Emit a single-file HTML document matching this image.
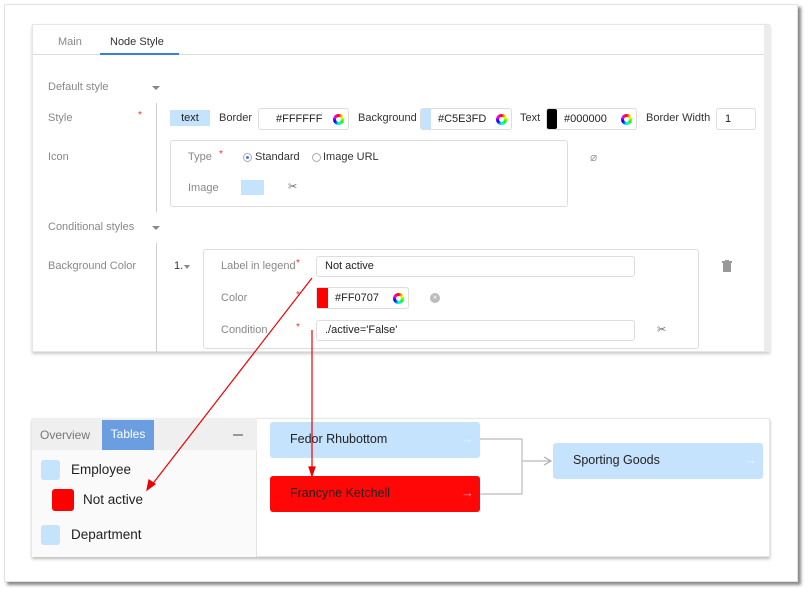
<!DOCTYPE html>
<html><head><meta charset="utf-8"><style>
*{box-sizing:border-box;margin:0;padding:0}
body{width:808px;height:590px;background:#fff;position:relative;font-family:"Liberation Sans",sans-serif;font-size:11px;color:#333;overflow:hidden}
.a{position:absolute}
.frame{left:4px;top:4px;width:794px;height:578px;background:#fff;border:1px solid #e2e2e2;box-shadow:3px 3px 3px #888}
.panel{left:32px;top:24px;width:738px;height:328px;background:#fff;border:1px solid #e6e6e6;border-right:6px solid #ececec;box-shadow:0 2px 3px #ccc}
.lbl{color:#888}
.star{color:#e33;font-size:10px}
.in{position:absolute;border:1px solid #ddd;border-radius:3px;background:#fff;height:22px;font-size:11px;color:#222;padding:0 0 0 8px;line-height:20px}
.wheel{position:absolute;width:11px;height:11px;border-radius:50%;background:conic-gradient(red,#ff0,#0f0,#0ff,#00f,#f0f,red);top:5px}
.wheel:after{content:"";position:absolute;left:3px;top:3px;width:5px;height:5px;border-radius:50%;background:#fff}
.caret{position:absolute;width:0;height:0;border-left:4px solid transparent;border-right:4px solid transparent;border-top:4px solid #888}
.node{position:absolute;width:210px;height:36px;border-radius:3px;font-size:12.5px;color:#222;padding-left:20px;line-height:34px}
.node .ar{position:absolute;right:6px;top:0;color:#e8f2ff;font-size:13px}
</style></head><body>
<div class="a frame"></div>
<div class="a panel"></div>
<div class="a" style="left:33px;top:54px;width:731px;height:1px;background:#ddd"></div>
<div class="a lbl" style="left:58px;top:36px;font-size:11px">Main</div>
<div class="a" style="left:110px;top:36px;font-size:11px;color:#333">Node Style</div>
<div class="a" style="left:100px;top:53px;width:79px;height:2px;background:#3d7fd4"></div>

<div class="a lbl" style="left:48px;top:81px">Default style</div>
<div class="caret" style="left:152px;top:86px"></div>
<div class="a lbl" style="left:48px;top:112px">Style</div>
<div class="a star" style="left:138px;top:110px">*</div>
<div class="a" style="left:156px;top:103px;width:1px;height:109px;background:#ccc"></div>
<div class="a lbl" style="left:48px;top:151px">Icon</div>

<div class="a" style="left:170px;top:110px;width:40px;height:16px;background:#c5e3fd;text-align:center;line-height:16px;color:#222">text</div>
<div class="a" style="left:219px;top:112px">Border</div>
<div class="in" style="left:258px;top:108px;width:91px;padding-left:17px">#FFFFFF<div class="wheel" style="right:4px"></div></div>
<div class="a" style="left:358px;top:112px">Background</div>
<div class="in" style="left:420px;top:108px;width:92px;padding-left:17px"><div class="a" style="left:0;top:0;width:10px;height:20px;background:#c5e3fd"></div>#C5E3FD<div class="wheel" style="right:4px"></div></div>
<div class="a" style="left:520px;top:112px">Text</div>
<div class="in" style="left:546px;top:108px;width:91px;padding-left:17px"><div class="a" style="left:0;top:0;width:10px;height:20px;background:#000;border-radius:2px"></div>#000000<div class="wheel" style="right:4px"></div></div>
<div class="a" style="left:646px;top:112px">Border Width</div>
<div class="in" style="left:716px;top:108px;width:40px">1</div>

<div class="a" style="left:170px;top:140px;width:398px;height:67px;border:1px solid #ddd;border-radius:3px"></div>
<div class="a lbl" style="left:188px;top:151px">Type</div>
<div class="a star" style="left:219px;top:149px">*</div>
<div class="a" style="left:243px;top:153px;width:9px;height:9px;border:1px solid #aaa;border-radius:50%"><div class="a" style="left:2px;top:2px;width:3px;height:3px;border-radius:50%;background:#3d7fd4"></div></div>
<div class="a" style="left:255px;top:151px">Standard</div>
<div class="a" style="left:312px;top:153px;width:9px;height:9px;border:1px solid #aaa;border-radius:50%"></div>
<div class="a" style="left:323px;top:151px">Image URL</div>
<div class="a lbl" style="left:188px;top:182px">Image</div>
<div class="a" style="left:241px;top:180px;width:23px;height:15px;background:#c5e3fd"></div>
<div class="a" style="left:288px;top:180px;color:#666;font-size:11px">✂</div>
<div class="a" style="left:590px;top:150px;color:#999;font-size:12px">⌀</div>

<div class="a lbl" style="left:48px;top:221px">Conditional styles</div>
<div class="caret" style="left:152px;top:226px"></div>
<div class="a" style="left:156px;top:243px;width:1px;height:109px;background:#ccc"></div>
<div class="a lbl" style="left:48px;top:260px">Background Color</div>
<div class="a" style="left:174px;top:260px">1.</div>
<div class="caret" style="left:184px;top:265px;border-left-width:3px;border-right-width:3px"></div>
<div class="a" style="left:203px;top:249px;width:496px;height:100px;border:1px solid #ddd;border-radius:3px"></div>
<div class="a lbl" style="left:221px;top:260px">Label in legend</div>
<div class="a star" style="left:296px;top:258px">*</div>
<div class="in" style="left:316px;top:256px;width:319px;height:21px;line-height:19px">Not active</div>
<div class="a lbl" style="left:221px;top:292px">Color</div>
<div class="a star" style="left:296px;top:290px">*</div>
<div class="in" style="left:316px;top:287px;width:93px;padding-left:18px"><div class="a" style="left:0;top:0;width:11px;height:20px;background:#f00"></div>#FF0707<div class="wheel" style="right:4px"></div></div>
<div class="a" style="left:430px;top:293px;width:10px;height:10px;border-radius:50%;background:#bbb;color:#fff;font-size:8px;line-height:10px;text-align:center">×</div>
<div class="a lbl" style="left:221px;top:324px">Condition</div>
<div class="a star" style="left:296px;top:322px">*</div>
<div class="in" style="left:316px;top:320px;width:319px;height:21px;line-height:19px">./active='False'</div>
<div class="a" style="left:657px;top:323px;color:#666;font-size:11px">✂</div>
<svg class="a" style="left:721px;top:260px" width="12" height="13"><rect x="2" y="3" width="8" height="9" fill="#999"/><rect x="1" y="1" width="10" height="2" fill="#999"/><rect x="4" y="0" width="4" height="1" fill="#999"/></svg>

<div class="a" style="left:32px;top:418px;width:738px;height:139px;background:#fff;border:1px solid #e6e6e6;box-shadow:0 2px 3px #bbb"></div>
<div class="a" style="left:32px;top:418px;width:225px;height:139px;background:#fafafa;border-right:1px solid #e3e3e3"></div>
<div class="a" style="left:32px;top:418px;width:225px;height:32px;background:#efefef"></div>
<div class="a" style="left:40px;top:428px;font-size:12px;color:#777">Overview</div>
<div class="a" style="left:102px;top:420px;width:52px;height:30px;background:#6a9ee0;color:#fff;font-size:12px;text-align:center;line-height:28px">Tables</div>
<div class="a" style="left:233px;top:434px;width:10px;height:2px;background:#999"></div>
<div class="a" style="left:41px;top:460px;width:19px;height:20px;background:#c5e3fd;border-radius:3px"></div>
<div class="a" style="left:71px;top:462px;font-size:13.5px;color:#222">Employee</div>
<div class="a" style="left:52px;top:489px;width:22px;height:22px;background:#f00;border-radius:3px"></div>
<div class="a" style="left:83px;top:492px;font-size:13.5px;color:#222">Not active</div>
<div class="a" style="left:41px;top:525px;width:19px;height:20px;background:#c5e3fd;border-radius:3px"></div>
<div class="a" style="left:71px;top:527px;font-size:13.5px;color:#222">Department</div>

<svg class="a" style="left:480px;top:430px" width="80" height="70"><path d="M0 9H42V64H0M42 31H70" fill="none" stroke="#bbb" stroke-width="1.2"/><path d="M64 27L71 31L64 35" fill="none" stroke="#aaa" stroke-width="1.2"/></svg>
<div class="node" style="left:270px;top:422px;background:#c5e3fd">Fedor Rhubottom<span class="ar">→</span></div>
<div class="node" style="left:270px;top:476px;background:#ff0707">Francyne Ketchell<span class="ar" style="color:#ff9a9a">→</span></div>
<div class="node" style="left:553px;top:443px;background:#c5e3fd">Sporting Goods<span class="ar">→</span></div>

<svg class="a" style="left:0;top:0" width="808" height="590"><g stroke="#e00" stroke-width="1.2" fill="#e00"><line x1="312" y1="278" x2="151" y2="486"/><path d="M147 490L149 480L155 484Z"/><line x1="312" y1="330" x2="312" y2="470"/><path d="M312 476L309 467L315 467Z"/></g></svg>
</body></html>
